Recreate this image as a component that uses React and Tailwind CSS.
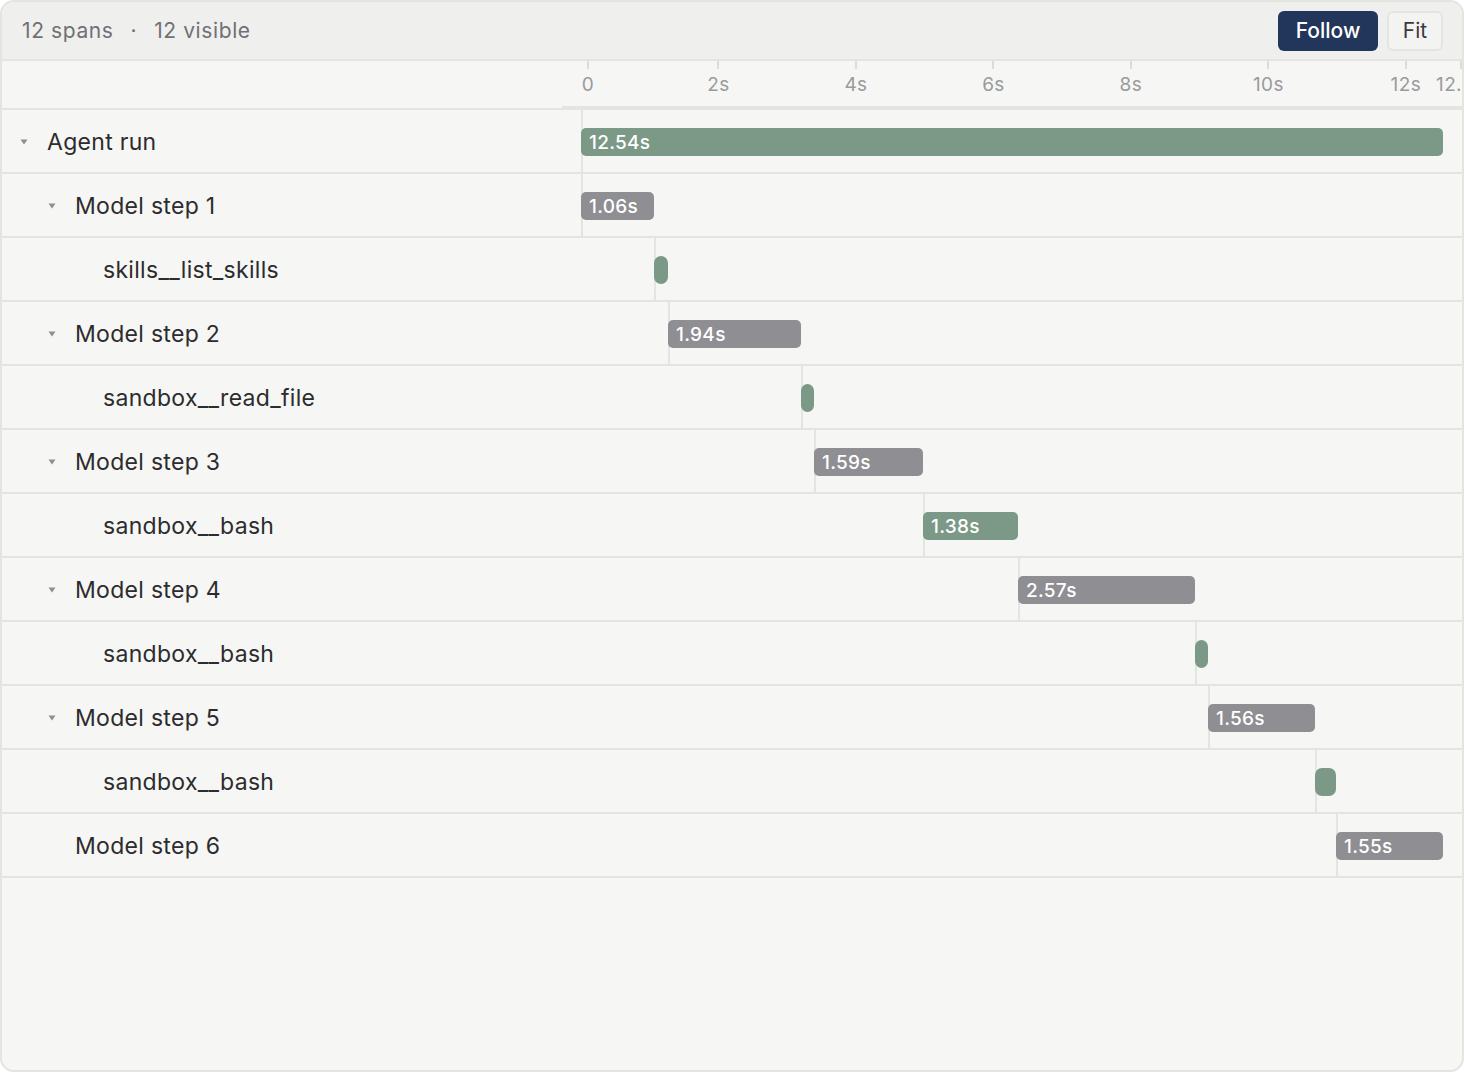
import React from 'react'

const PX = 68.74
const X0 = 19

const spans = [
  { name: 'Agent run', level: 0, caret: true, start: 0, dur: 12.54, kind: 'run' },
  { name: 'Model step 1', level: 1, caret: true, start: 0, dur: 1.06, kind: 'model' },
  { name: 'skills__list_skills', level: 2, start: 1.062, dur: 0.2, kind: 'tool' },
  { name: 'Model step 2', level: 1, caret: true, start: 1.266, dur: 1.94, kind: 'model' },
  { name: 'sandbox__read_file', level: 2, start: 3.2, dur: 0.19, kind: 'tool' },
  { name: 'Model step 3', level: 1, caret: true, start: 3.39, dur: 1.59, kind: 'model' },
  { name: 'sandbox__bash', level: 2, start: 4.975, dur: 1.38, kind: 'tool' },
  { name: 'Model step 4', level: 1, caret: true, start: 6.357, dur: 2.57, kind: 'model' },
  { name: 'sandbox__bash', level: 2, start: 8.932, dur: 0.19, kind: 'tool' },
  { name: 'Model step 5', level: 1, caret: true, start: 9.121, dur: 1.56, kind: 'model' },
  { name: 'sandbox__bash', level: 2, start: 10.678, dur: 0.305, kind: 'tool' },
  { name: 'Model step 6', level: 1, start: 10.983, dur: 1.55, kind: 'model' },
]

const ticks = [
  { label: '0', x: 26 },
  { label: '2s', x: X0 + 2 * PX },
  { label: '4s', x: X0 + 4 * PX },
  { label: '6s', x: X0 + 6 * PX },
  { label: '8s', x: X0 + 8 * PX },
  { label: '10s', x: X0 + 10 * PX },
  { label: '12s', x: X0 + 12 * PX },
]

function Caret() {
  return (
    <svg width="8" height="6" viewBox="0 0 8 6" className="text-[#8e8e93]">
      <polygon points="0.5,0.5 7.5,0.5 4,5.5" fill="currentColor" />
    </svg>
  )
}

function Row({ span }) {
  const left = X0 + span.start * PX
  const width = Math.max(13, span.dur * PX)
  const showLabel = width > 40
  const color = span.kind === 'model' ? 'bg-[#8e8e93]' : 'bg-[#7b9986]'
  return (
    <div className="flex h-[64px] border-b-2 border-[#e4e4e0]">
      <div
        className="w-[560px] flex items-center shrink-0 pt-[2px]"
        style={{ paddingLeft: 18 + span.level * 28 }}
      >
        <span className="w-[27px] flex items-center">
          {span.caret && <Caret />}
        </span>
        <span className="text-[23px] text-[#2c2c2f] tracking-[0.3px]">{span.name}</span>
      </div>
      <div className="relative flex-1">
        <div className="absolute top-0 bottom-0 w-[2px] bg-[#e4e4e0]" style={{ left }} />
        <div
          className={`absolute top-[18px] h-[28px] ${showLabel ? 'rounded-[5px]' : 'rounded-[7px]'} ${color} flex items-center`}
          style={{ left, width }}
        >
          {showLabel && (
            <span className="pl-[8px] text-[19px] font-medium text-white leading-none tracking-[0.3px]">
              {span.dur.toFixed(2)}s
            </span>
          )}
        </div>
      </div>
    </div>
  )
}

export default function App() {
  return (
    <div
      className="w-[1464px] h-[1072px] bg-[#f6f6f4] border-2 border-[#e4e4e0] rounded-[14px] overflow-hidden flex flex-col"
      style={{ fontFamily: 'Inter, "Noto Sans", sans-serif' }}
    >
      <div className="h-[59px] shrink-0 bg-[#efefed] border-b-2 border-[#e4e4e0] flex items-center justify-between pl-[20px] pr-[19px]">
        <div className="flex items-center text-[21px] text-[#707075] tracking-[0.6px]">
          <span>12 spans</span>
          <span className="mx-[17px]">·</span>
          <span>12 visible</span>
        </div>
        <div className="flex items-center gap-[9px]">
          <button className="h-[40px] w-[100px] rounded-[6px] bg-[#21365a] text-white text-[21px] font-medium">
            Follow
          </button>
          <button className="h-[40px] w-[56px] rounded-[6px] bg-[#f3f3f1] border-2 border-[#e4e4e0] text-[#3a3a3c] text-[21px]">
            Fit
          </button>
        </div>
      </div>

      <div className="flex h-[49px] shrink-0">
        <div className="w-[560px] border-b-2 border-[#e4e4e0]" />
        <div className="relative flex-1 border-b-4 border-[#e4e4e0]">
          {ticks.map(t => (
            <div key={t.label} className="absolute top-0" style={{ left: t.x }}>
              <div className="w-[2px] h-[8px] bg-[#dcdcd8] -translate-x-1/2" />
              <div className="absolute top-[10px] -translate-x-1/2 text-[19px] text-[#9a9a9c] tracking-[0.4px] whitespace-nowrap">
                {t.label}
              </div>
            </div>
          ))}
          <div className="absolute top-0 right-0 w-[2px] h-[8px] bg-[#dcdcd8]" />
          <div className="absolute top-[10px] left-[874px] text-[19px] text-[#9a9a9c] tracking-[0.4px] whitespace-nowrap">
            12.
          </div>
        </div>
      </div>

      {spans.map((s, i) => (
        <Row key={i} span={s} />
      ))}

      <div className="flex-1" />
    </div>
  )
}
